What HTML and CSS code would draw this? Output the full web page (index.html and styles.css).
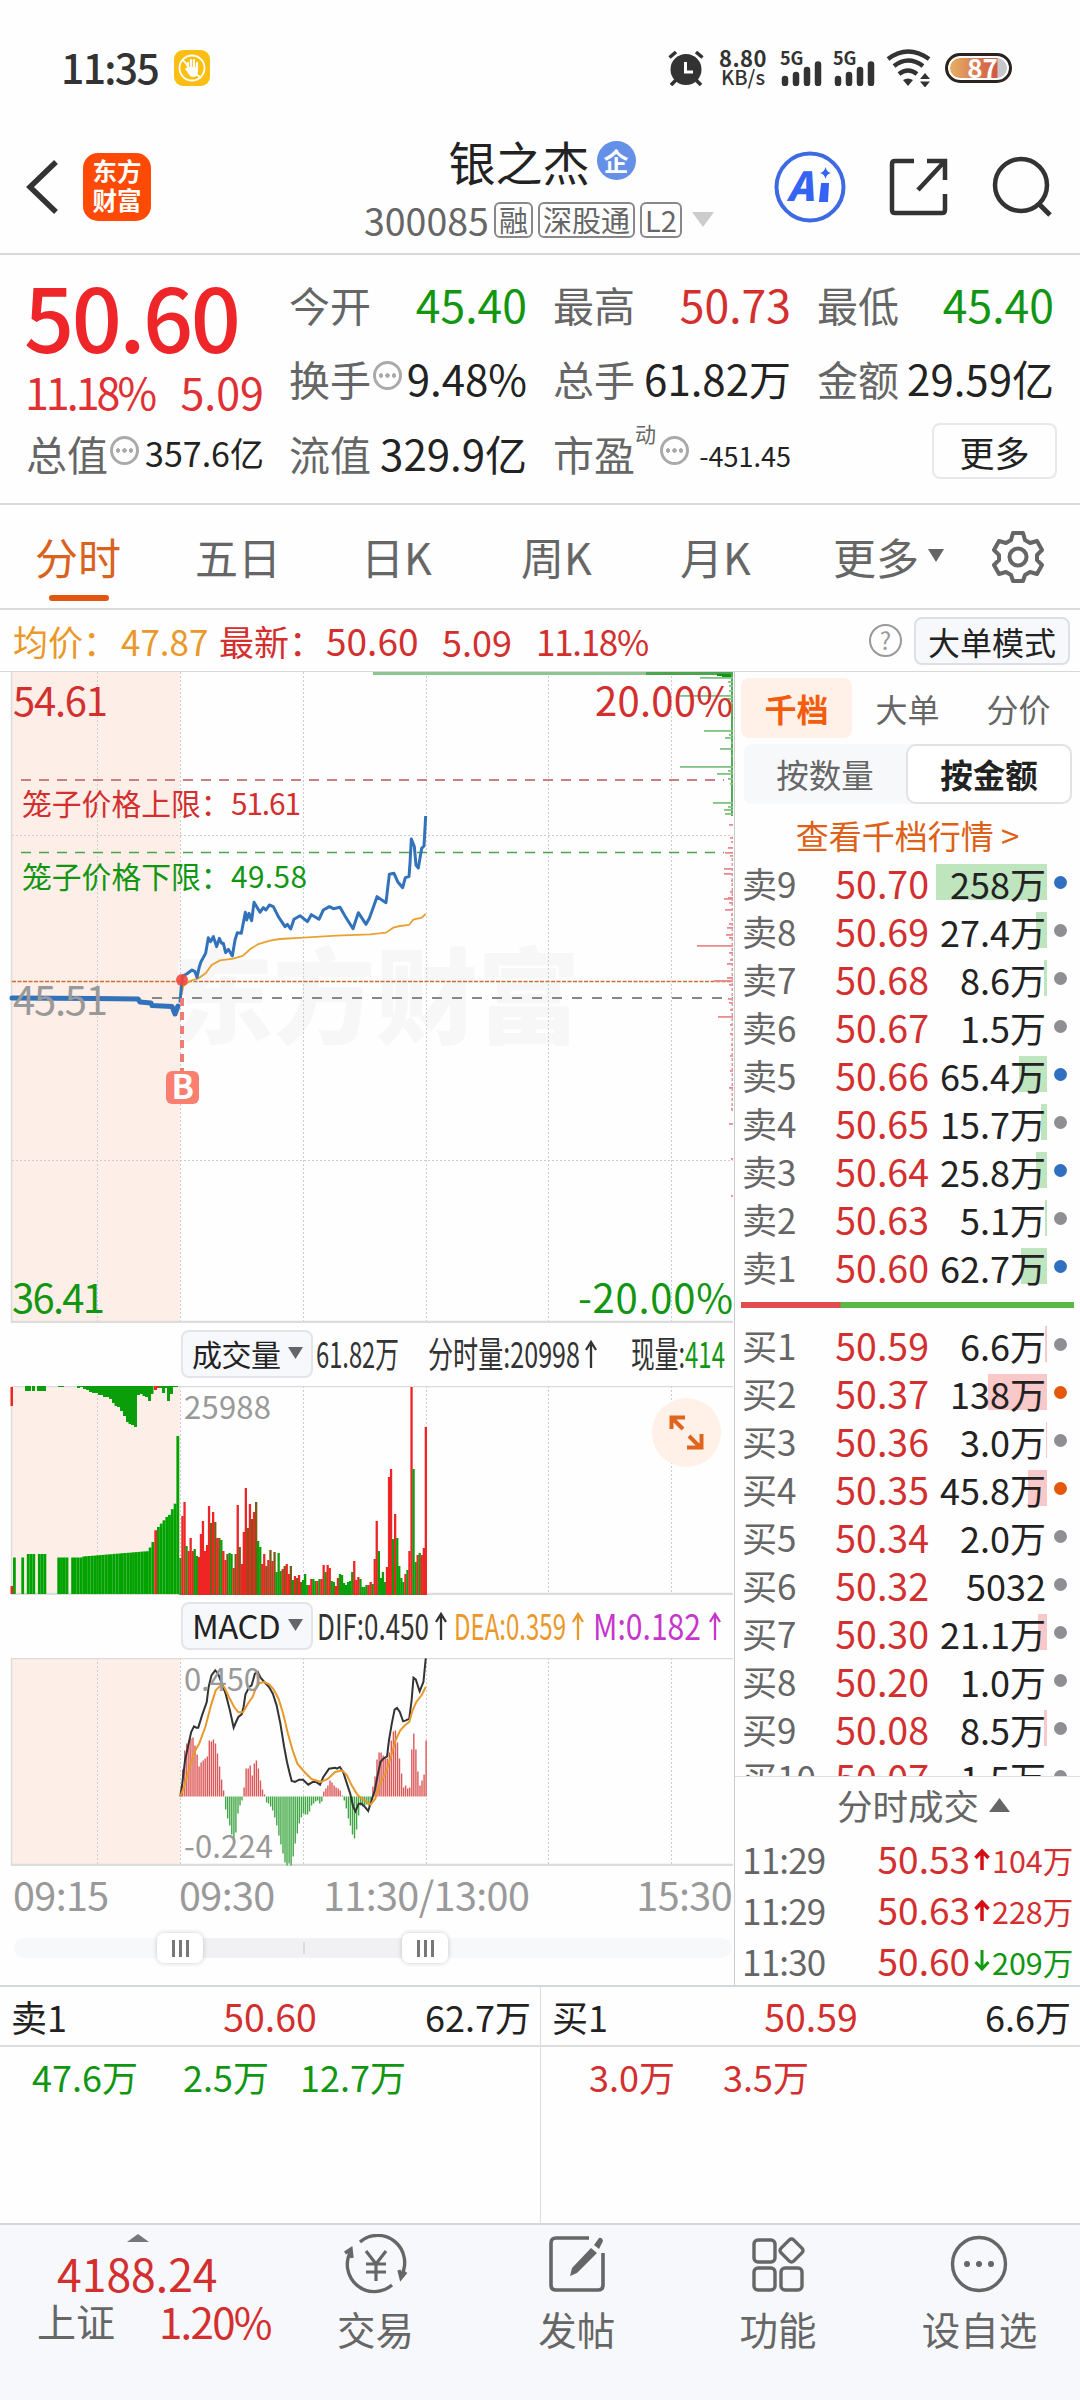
FILE: index.html
```html
<!DOCTYPE html>
<html lang="zh-CN">
<head>
    <meta charset="UTF-8">
    <meta name="viewport" content="width=device-width, initial-scale=1.0">
    <title>银之杰 300085</title>
    <link rel="stylesheet" href="styles.css">
</head>
<body>
    <div class="status-bar">
        <span class="clock">11:35</span>
        <svg class="app-badge" width="36" height="36" viewBox="0 0 36 36">
            <rect width="36" height="36" rx="9" fill="#fbbf14"/>
            <circle cx="18" cy="18" r="12.500" fill="none" stroke="#fff" stroke-width="1.800"/>
            <path d="M14 19v-6M17 18v-8M20 18v-8M23 19v-6" stroke="#fff" stroke-width="2.200" stroke-linecap="round"/>
            <path d="M13 17h11v4q0 6-5 6-3 0-5-4l-3-4q1-2 3 0z" fill="#fff"/>
            <path d="M9 10l5 6M22 24l5 4" stroke="#fff" stroke-width="1.800"/>
        </svg>
        <div class="status-right">
            <svg width="36" height="36" viewBox="0 0 36 36">
                <circle cx="18" cy="19.500" r="15.500" fill="#333"/>
                <path d="M1.500 7.500L8 2M34.500 7.500L28 2M8 30l-5 5M28 30l5 5" stroke="#333" stroke-width="3.600"/>
                <path d="M17.500 12v10h7.500" fill="none" stroke="#fff" stroke-width="3"/>
            </svg>
            <div class="net-speed"><b>8.80</b><span>KB/s</span></div>
            <div class="signal">
                <b>5G</b>
                <svg width="42" height="26" viewBox="0 0 42 26"><path d="M4 19v4M15 15v8M26 10v13M37 4.500v18.500" stroke="#333" stroke-width="6.500" stroke-linecap="round"/></svg>
            </div>
            <div class="signal">
                <b>5G</b>
                <svg width="42" height="26" viewBox="0 0 42 26"><path d="M4 19v4M15 15v8M26 10v13M37 4.500v18.500" stroke="#333" stroke-width="6.500" stroke-linecap="round"/></svg>
            </div>
            <svg class="wifi" width="46" height="38" viewBox="0 0 46 38">
                <path d="M2 10Q22-5 43 10M8 17q14-11 29 0M13 25q9-7 18 0" fill="none" stroke="#333" stroke-width="4.500"/>
                <path d="M17 31q5-3 10 0l-5 6zM34 30l5-6 5 6zM34 32.500h10l-5 6z" fill="#333"/>
            </svg>
            <div class="battery"><span>87</span></div>
        </div>
    </div>

    <header class="header">
        <div class="header-left">
            <svg width="34" height="56" viewBox="0 0 34 56"><path d="M30 3L4 28l26 25" fill="none" stroke="#333" stroke-width="5.500"/></svg>
            <div class="logo">东方<br>财富</div>
        </div>
        <div class="title">
            <div class="name">银之杰<span class="ent">企</span></div>
            <div class="code">300085<span class="tag">融</span><span class="tag">深股通</span><span class="tag">L2</span><svg width="22" height="15" viewBox="0 0 22 15"><path d="M0 0h22L11 15z" fill="#ccc"/></svg></div>
        </div>
        <div class="header-right">
            <svg width="72" height="74" viewBox="0 0 72 74">
                <circle cx="36" cy="37" r="33.500" fill="none" stroke="#3d69e3" stroke-width="4"/>
                <text x="13" y="51" class="ai-text">A</text>
                <path d="M48 34h6l-1 17h-7z" fill="#3563f4" stroke="#3563f4" stroke-width="2"/>
                <path d="M51.500 17q1 5 5.500 6-4.500 1-5.500 6-1-5-5.500-6 4.500-1 5.500-6z" fill="#3563f4"/>
            </svg>
            <svg width="60" height="60" viewBox="0 0 60 60"><path d="M25 4H6q-3 0-3 3v46q0 3 3 3h47q3 0 3-3V37M38 4h18v19M56 4L29 33" fill="none" stroke="#333" stroke-width="4.500"/></svg>
            <svg width="62" height="62" viewBox="0 0 62 62"><circle cx="29" cy="29" r="26" fill="none" stroke="#333" stroke-width="4.500"/><path d="M47 48l11 11" stroke="#333" stroke-width="5"/></svg>
        </div>
    </header>

    <section class="quote">
        <div class="quote-main">
            <div class="price">50.60</div>
            <div class="change"><span>11.18%</span><span>5.09</span></div>
            <div class="cell cap"><label>总值</label><i class="more-dot"></i><span class="mid">357.6亿</span></div>
        </div>
        <div class="quote-grid">
            <div class="cell"><label>今开</label><span class="green">45.40</span></div>
            <div class="cell"><label>最高</label><span class="red">50.73</span></div>
            <div class="cell"><label>最低</label><span class="green">45.40</span></div>
            <div class="cell"><label>换手</label><i class="more-dot"></i><span>9.48%</span></div>
            <div class="cell"><label>总手</label><span>61.82万</span></div>
            <div class="cell"><label>金额</label><span>29.59亿</span></div>
            <div class="cell"><label>流值</label><span>329.9亿</span></div>
            <div class="cell"><label>市盈</label><sup>动</sup><i class="more-dot"></i><span class="small">-451.45</span></div>
            <div class="cell"><button class="more-btn">更多</button></div>
        </div>
    </section>

    <nav class="tabs">
        <span class="tab active">分时</span>
        <span class="tab">五日</span>
        <span class="tab">日K</span>
        <span class="tab">周K</span>
        <span class="tab">月K</span>
        <span class="tab">更多<svg width="16" height="13" viewBox="0 0 16 13"><path d="M0 0h16L8 13z" fill="#666"/></svg></span>
        <svg class="gear" width="54" height="54" viewBox="0 0 54 54">
            <path d="M22 3h10l2 7 5 3 7-2 5 9-5 5v5l5 5-5 9-7-2-5 3-2 6H22l-2-6-5-3-7 2-5-9 5-5v-5l-5-5 5-9 7 2 5-3z" fill="none" stroke="#666" stroke-width="4" stroke-linejoin="round"/>
            <circle cx="27" cy="27" r="8.500" fill="none" stroke="#666" stroke-width="4"/>
        </svg>
    </nav>

    <div class="info">
        <span class="orange">均价：</span><span class="orange avg">47.87</span>
        <span class="red">最新：</span><span class="red last">50.60</span><span class="red diff">5.09</span><span class="red rate">11.18%</span>
        <span class="help">?</span>
        <button class="mode-btn">大单模式</button>
    </div>

    <main class="main">
        <div class="charts">
            <svg class="price-chart" width="734" height="651" viewBox="0 0 734 651">
                <rect x="12" y="0" width="168" height="650" class="pre"/>
                <text x="171" y="364" textLength="409" lengthAdjust="spacingAndGlyphs" class="watermark">东方财富</text>
                <g class="grid">
                    <path d="M97.500 0v650M180.500 0v650M303.500 0v650M426.500 0v650M548.500 0v650M671.500 0v650M12 163.500h721M12 488.500h721"/>
                </g>
                <path d="M11.500 0v650" class="frame"/>
                <path d="M11 650h722" class="frame thick"/>
                <path d="M21 108h703" stroke="#cc7f80" stroke-width="2" stroke-dasharray="10 8"/>
                <path d="M21 180.500h703" stroke="#4aa54d" stroke-width="1.500" stroke-dasharray="10 8"/>
                <path d="M12 309.500h721" stroke="#c9703a" stroke-width="1.300" stroke-dasharray="4 1.500"/>
                <path d="M152 326h581" stroke="#888" stroke-width="2" stroke-dasharray="10 10"/>
                <path d="M12 326L95 326.500 138 327 140 330 151 331 152 333.500 172 334.500 175 342 178 334" class="line-pre"/>
                <svg x="170" y="108" width="280" height="330" viewBox="0 0 840 990">
                    <polyline class="line-avg" points="34,645 40,618 60,603 85,595 107,580 125,555 150,541 190,536 218,528 240,508 265,492 300,482 330,477 400,473 500,467 600,463 648,458 670,443 690,438 717,435 730,419 755,413 767,402"/>
                    <polyline class="line-price" points="30,668 34,620 38,588 50,582 66,570 75,575 81,592 88,560 93,545 107,520 115,473 122,485 130,470 140,500 148,475 155,490 160,490 167,518 175,508 187,528 195,480 202,458 214,460 226,397 230,420 237,400 245,422 252,367 270,397 280,383 288,390 298,375 310,380 325,410 345,440 352,433 362,447 372,418 390,407 412,425 424,404 447,418 460,390 478,380 490,386 510,382 525,408 540,432 549,446 565,398 588,433 598,415 610,382 621,350 648,368 658,283 672,280 683,305 698,323 706,293 717,290 720,250 724,177 733,200 738,255 745,264 755,205 762,198 767,108"/>
                </svg>
                <g id="depth"></g>
                <path d="M182 326v76" stroke="#ec7e74" stroke-width="4" stroke-dasharray="8 6"/>
                <circle cx="182" cy="308" r="6" fill="#f0493c" opacity=".9"/>
                <rect x="166" y="399" width="33" height="33" rx="6" fill="#fb7f70"/>
                <text x="171.500" y="427" class="flag">B</text>
                <text x="13" y="43.500" class="axis-text red" textLength="95">54.61</text>
                <text x="13" y="343" class="axis-text mute" textLength="95">45.51</text>
                <text x="12" y="641" class="axis-text green" textLength="93">36.41</text>
                <text x="733" y="43.500" class="axis-text red" text-anchor="end" textLength="138">20.00%</text>
                <text x="733" y="641" class="axis-text green" text-anchor="end" textLength="155">-20.00%</text>
                <text x="22" y="143" class="cage red">笼子价格上限：</text>
                <text x="231" y="143" class="cage red" textLength="70">51.61</text>
                <text x="22" y="216" class="cage green">笼子价格下限：</text>
                <text x="231" y="216" class="cage green" textLength="76">49.58</text>
            </svg>

            <div class="sub-head">
                <button class="indicator">成交量<svg width="15" height="12" viewBox="0 0 15 12"><path d="M0 0h15L7.500 12z" fill="#666"/></svg></button>
                <svg class="readout" width="421" height="60" viewBox="313 0 421 60">
                    <text x="316" y="44" textLength="83" lengthAdjust="spacingAndGlyphs">61.82万</text>
                    <text x="428" y="44" textLength="152" lengthAdjust="spacingAndGlyphs">分时量:20998</text>
                    <path d="M591 44V18M586 26l5-8 5 8" fill="none" stroke="#333" stroke-width="2.300"/>
                    <text x="631" y="44" textLength="54" lengthAdjust="spacingAndGlyphs">现量:</text>
                    <text x="685" y="44" textLength="40" lengthAdjust="spacingAndGlyphs" class="green">414</text>
                </svg>
            </div>
            <svg class="sub-chart" width="734" height="209" viewBox="0 0 734 209">
                <rect x="12" y="0" width="168" height="208" class="pre"/>
                <path class="grid" d="M97.500 0v208M180.500 0v208M303.500 0v208M426.500 0v208M548.500 0v208M671.500 0v208"/>
                <path d="M11 .5h722M11.500 0v208" class="frame"/>
                <path d="M11 208h722" class="frame thick"/>
                <g id="volume"></g>
                <text x="184" y="33" class="scale" textLength="87">25988</text>
                <circle cx="686.500" cy="46.500" r="34.500" fill="#fff0e8"/>
                <path d="M671.500 43V31.500H685M672 32l11 11M689 50l11 11M687 61.500h14.500V48" fill="none" stroke="#de6420" stroke-width="4"/>
            </svg>

            <div class="sub-head macd-head">
                <button class="indicator">MACD<svg width="15" height="12" viewBox="0 0 15 12"><path d="M0 0h15L7.500 12z" fill="#666"/></svg></button>
                <svg class="readout" width="421" height="60" viewBox="313 0 421 60">
                    <text x="317" y="44" textLength="112" lengthAdjust="spacingAndGlyphs">DIF:0.450</text>
                    <path d="M441 44V18M436 26l5-8 5 8" fill="none" stroke="#333" stroke-width="2.300"/>
                    <text x="454" y="44" textLength="112" lengthAdjust="spacingAndGlyphs" class="orange">DEA:0.359</text>
                    <path d="M578 44V18M573 26l5-8 5 8" fill="none" stroke="#eb982a" stroke-width="2.300"/>
                    <text x="593" y="44" textLength="108" lengthAdjust="spacingAndGlyphs" class="purple">M:0.182</text>
                    <path d="M715 44V18M710 26l5-8 5 8" fill="none" stroke="#c636cc" stroke-width="2.300"/>
                </svg>
            </div>
            <svg class="sub-chart" width="734" height="208" viewBox="0 0 734 208">
                <rect x="12" y="0" width="168" height="207" class="pre"/>
                <path class="grid" d="M97.500 0v207M180.500 0v207M303.500 0v207M426.500 0v207M548.500 0v207M671.500 0v207"/>
                <path d="M11 .5h722M11.500 0v207" class="frame"/>
                <path d="M11 207h722" class="frame thick"/>
                <g id="macd"></g>
                <svg width="734" height="207" viewBox="0 203 1555 621" preserveAspectRatio="none">
                    <polyline class="line-dif" points="382,618 386,580 392,510 398,470 405,425 411,408 416,412 420,412 428,375 438,335 442,290 448,255 456,240 462,250 470,280 478,310 487,360 495,412 500,395 505,380 512,372 516,350 520,312 528,290 533,285 540,250 546,245 552,262 560,275 570,290 578,310 586,345 594,400 602,470 608,515 613,545 618,572 625,575 634,568 642,568 653,583 664,574 671,576 678,583 685,560 690,550 697,535 710,532 714,535 720,530 727,545 735,580 742,610 748,648 753,663 760,640 766,640 772,648 780,662 786,635 794,600 800,555 806,515 812,505 820,498 824,450 830,400 836,358 841,353 847,365 854,393 860,390 867,385 872,330 876,262 881,268 889,303 897,275 902,204"/>
                    <polyline class="line-dea" points="382,618 390,590 400,540 412,485 422,460 435,410 447,345 457,300 468,285 475,290 485,320 496,350 505,366 515,366 525,340 535,320 543,290 550,278 560,275 570,282 580,298 590,325 600,370 610,430 620,480 630,520 645,545 660,566 680,575 695,565 710,545 725,540 735,555 745,585 758,615 770,628 785,643 795,625 805,580 818,545 828,500 838,450 848,420 858,405 867,395 874,360 882,335 893,315 902,290"/>
                </svg>
                <text x="184" y="33" class="scale" textLength="77">0.450</text>
                <text x="184" y="200" class="scale" textLength="89">-0.224</text>
            </svg>

            <div class="time-axis">
                <span>09:15</span><span>09:30</span><span>11:30/13:00</span><span>15:30</span>
            </div>
            <div class="slider">
                <div class="range"></div>
                <div class="handle start"><i></i><i></i><i></i></div>
                <div class="handle end"><i></i><i></i><i></i></div>
            </div>
        </div>

        <aside class="book">
            <div class="book-tabs"><span class="on">千档</span><span>大单</span><span>分价</span></div>
            <div class="book-toggle"><span>按数量</span><span class="on">按金额</span></div>
            <div class="book-link">查看千档行情 &gt;</div>
            <div class="levels sell" id="sell"></div>
            <div class="ratio"></div>
            <div class="levels buy" id="buy"></div>
            <div class="deal-title">分时成交<svg width="21" height="14" viewBox="0 0 21 14"><path d="M10.500 0L21 14H0z" fill="#666"/></svg></div>
            <div class="deals">
                <div class="deal red"><time>11:29</time><span>50.53</span><svg width="16" height="22" viewBox="0 0 16 22"><path d="M8 22V3M1.500 10L8 3l6.500 7" fill="none" stroke="#d40f14" stroke-width="3.500"/></svg><em>104万</em></div>
                <div class="deal red"><time>11:29</time><span>50.63</span><svg width="16" height="22" viewBox="0 0 16 22"><path d="M8 22V3M1.500 10L8 3l6.500 7" fill="none" stroke="#d40f14" stroke-width="3.500"/></svg><em>228万</em></div>
                <div class="deal red"><time>11:30</time><span>50.60</span><svg width="16" height="22" viewBox="0 0 16 22"><path d="M8 0v19M1.500 12L8 19l6.500-7" fill="none" stroke="#129a12" stroke-width="3"/></svg><em class="green">209万</em></div>
            </div>
        </aside>
    </main>

    <section class="queues">
        <div class="queue">
            <div class="queue-head"><span>卖1</span><span class="red">50.60</span><span>62.7万</span></div>
            <div class="queue-list green"><span>47.6万</span><span>2.5万</span><span>12.7万</span></div>
        </div>
        <div class="queue">
            <div class="queue-head"><span>买1</span><span class="red">50.59</span><span>6.6万</span></div>
            <div class="queue-list red"><span>3.0万</span><span>3.5万</span></div>
        </div>
    </section>

    <footer class="bottom-nav">
        <div class="index">
            <svg width="22" height="8" viewBox="0 0 22 8"><path d="M11 0l11 8H0z" fill="#777"/></svg>
            <div class="index-value">4188.24</div>
            <div class="index-row"><span>上证</span><b>1.20%</b></div>
        </div>
        <div class="nav-item">
            <svg width="64" height="60" viewBox="0 0 64 60">
                <path d="M16 8A27 27 0 0 1 57 42M48 51A27 27 0 0 1 7 17M1 19l6-4 1 9M62 38l-5 6-2-8" fill="none" stroke="#666" stroke-width="3.400"/>
                <path d="M22 17l10 13 10-13M32 30v17M22 30h20M22 38h20" fill="none" stroke="#666" stroke-width="3.200"/>
            </svg>
            <span>交易</span>
        </div>
        <div class="nav-item">
            <svg width="58" height="60" viewBox="0 0 58 60">
                <path d="M41 4H8q-5 0-5 5v42q0 5 5 5h42q5 0 5-5V19" fill="none" stroke="#666" stroke-width="3.600"/>
                <path d="M43 14l6 5-20 20-7 3 2-8zM46 11l5-7q3-1 4 3l-4 8z" fill="#666"/>
            </svg>
            <span>发帖</span>
        </div>
        <div class="nav-item">
            <svg width="56" height="60" viewBox="0 0 56 60" fill="none" stroke="#666" stroke-width="3.400">
                <rect x="4" y="6" width="21" height="22" rx="4"/><rect x="4" y="34" width="21" height="22" rx="4"/><rect x="31" y="34" width="21" height="22" rx="4"/>
                <rect x="32.500" y="7.500" width="18" height="18" rx="3" transform="rotate(45 41.500 16.500)"/>
            </svg>
            <span>功能</span>
        </div>
        <div class="nav-item">
            <svg width="60" height="60" viewBox="0 0 60 60"><circle cx="30" cy="30" r="26.500" fill="none" stroke="#666" stroke-width="3.400"/><circle cx="18" cy="30" r="3" fill="#666"/><circle cx="30" cy="30" r="3" fill="#666"/><circle cx="42" cy="30" r="3" fill="#666"/></svg>
            <span>设自选</span>
        </div>
    </footer>

    <script src="chart.js"></script>
</body>
</html>
```
FILE: styles.css
```css
* {
    margin: 0;
    padding: 0;
    box-sizing: border-box;
}

body {
    width: 1080px;
    height: 2400px;
    overflow: hidden;
    background: #fefefe;
    color: #222;
    font-family: "Noto Sans CJK SC", "Noto Sans", sans-serif;
    font-size: 36px;
    line-height: 1;
    white-space: nowrap;
}

svg {
    display: block;
    flex: none;
}

button {
    font: inherit;
    color: inherit;
}

i, em {
    font-style: normal;
}

.red { color: #d32f2f; fill: #d32f2f; }
.green { color: #129612; fill: #129612; }
.orange { color: #eb982a; fill: #eb982a; }
.purple { fill: #c636cc; }
.mute { fill: #999; }

/* status bar */
.status-bar {
    height: 110px;
    padding: 26px 68px 0 61px;
    display: flex;
    align-items: center;
    color: #333;
}

.clock {
    margin-top: -4px;
    font-size: 41px;
    font-weight: 500;
    letter-spacing: -1.7px;
}

.app-badge {
    margin-left: 16px;
}

.status-right {
    margin-left: auto;
    display: flex;
    align-items: center;
}

.net-speed {
    width: 50px;
    margin-left: 14px;
    margin-top: -2px;
    font-size: 20px;
    line-height: 19px;
    text-align: center;
    font-weight: 500;
}

.net-speed b {
    display: block;
    font-size: 22px;
    letter-spacing: .5px;
}

.signal {
    width: 42px;
    height: 36px;
    margin-left: 13px;
    position: relative;
}

.signal b {
    display: block;
    font-size: 18px;
    line-height: 14px;
    margin-left: -1px;
}

.signal svg {
    margin-top: -4px;
}

.signal + .signal {
    margin-left: 11px;
}

.wifi {
    margin-left: 10px;
}

.battery {
    width: 67px;
    height: 30px;
    margin-left: 13px;
    border: 3px solid #2b2320;
    border-radius: 15px;
    background: linear-gradient(90deg, #e6b466, #d97850 50%, #cf5a44 80%, #c8c8cc 82%);
    box-shadow: inset 0 0 0 2px #fff;
    color: #fff;
    font-size: 26px;
    font-weight: 700;
    line-height: 22px;
    text-align: center;
    padding-left: 8px;
}

/* header */
.header {
    height: 145px;
    padding: 0 24px 0 26px;
    border-bottom: 2px solid #d9d9d9;
    display: flex;
    justify-content: space-between;
}

.header-left, .header-right {
    width: 310px;
    height: 144px;
    margin-top: 5px;
    display: flex;
    align-items: center;
}

.logo {
    width: 68px;
    height: 68px;
    margin-left: 23px;
    border-radius: 15px;
    background: #ff4a06;
    color: #fff;
    font-size: 24.5px;
    font-weight: 700;
    line-height: 29px;
    padding-top: 3px;
    text-align: center;
}

.title {
    width: 352px;
    margin-left: -2px;
    padding-top: 27px;
}

.name {
    display: flex;
    align-items: center;
    justify-content: center;
    padding-left: 4px;
    font-size: 47px;
}

.ent {
    width: 39px;
    height: 39px;
    margin-left: 7px;
    border-radius: 50%;
    background: #6490e8;
    color: #fff;
    font-size: 25px;
    font-weight: 700;
    line-height: 38px;
    text-align: center;
}

.code {
    margin-top: 17px;
    display: flex;
    align-items: center;
    color: #666;
    font-size: 37.5px;
}

.tag {
    height: 36px;
    margin-left: 5px;
    padding: 0 3px;
    border: 2px solid #888;
    border-radius: 6px;
    font-size: 29px;
    line-height: 31px;
}

.code svg {
    margin-left: 10px;
}

.header-right {
    padding-left: 28px;
}

.header-right svg:nth-child(2) {
    margin-left: 43px;
}

.header-right svg:nth-child(3) {
    margin-left: 43px;
}

.ai-text {
    font: italic 900 40px "Noto Sans CJK SC", sans-serif;
    fill: #3563f4;
}

/* quote */
.quote {
    height: 250px;
    padding: 0 26px;
    border-bottom: 2px solid #d9d9d9;
    display: flex;
}

.quote-main {
    width: 238px;
    padding-top: 13px;
}

.price {
    font-size: 88px;
    font-weight: 500;
    letter-spacing: -2.5px;
    margin-left: -2px;
    line-height: 94px;
    color: #ee2529;
}

.change {
    display: flex;
    justify-content: space-between;
    margin: 7px 0 0 -1px;
    font-size: 43px;
    line-height: 44px;
    color: #e03033;
}

.change span:first-child {
    letter-spacing: -3px;
}

.quote-grid {
    margin-left: 25px;
    width: 765px;
    display: grid;
    grid-template-columns: 238px 238px 237px;
    column-gap: 26px;
    grid-template-rows: 74px 75px 74px;
    padding-top: 12px;
}

.cell {
    display: flex;
    align-items: center;
    height: 74px;
    font-size: 44.5px;
}

.cell label {
    font-size: 41px;
    color: #666;
}

.cell span {
    margin-left: auto;
    white-space: nowrap;
}

.cell:nth-child(n+4) span {
    font-size: 42px;
}

.cell .mid {
    font-size: 34px;
}

.cell .small, .cell:nth-child(n+4) .small {
    font-size: 27px;
    padding-top: 4px;
}

.cell sup {
    font-size: 21px;
    color: #666;
    align-self: flex-start;
    margin-top: 7px;
}

.cap {
    margin-top: 3px;
}

.more-dot {
    flex: none;
    width: 29px;
    height: 29px;
    border: 3px solid #aaa;
    border-radius: 50%;
    background:
        radial-gradient(circle at 5px 11.5px, #aaa 2px, transparent 2.5px),
        radial-gradient(circle at 11.5px 11.5px, #aaa 2px, transparent 2.5px),
        radial-gradient(circle at 18px 11.5px, #aaa 2px, transparent 2.5px);
    margin: -6px 0 0 2px;
}

.cell sup + .more-dot {
    margin-left: 4px;
}

.more-btn {
    width: 125px;
    height: 56px;
    margin: -4px -3px 0 auto;
    background: none;
    border: 2px solid #e6e8eb;
    border-radius: 8px;
    font-size: 35px;
}

/* tabs */
.tabs {
    height: 105px;
    border-bottom: 2px solid #dadada;
    padding: 0 34px 0 35px;
    display: grid;
    grid-template-columns: 160px 166px 160px 159px 153px 158px 54px;
    align-items: center;
    color: #666;
    font-size: 43px;
}

.tab {
    height: 103px;
    position: relative;
    display: flex;
    align-items: center;
}

.tab svg {
    margin: -2px 0 0 9px;
}

.tab.active {
    color: #d9621f;
}

.tab.active::after {
    content: "";
    position: absolute;
    left: 14px;
    bottom: 7px;
    width: 60px;
    height: 6px;
    border-radius: 3px;
    background: #e0560f;
}

/* info row */
.info {
    height: 62px;
    padding: 0 10px 0 13px;
    display: flex;
    align-items: center;
    font-size: 35px;
    border-bottom: 1px solid #d8d8d8;
}

.avg { width: 98px; margin-left: 3px; }
.last { margin-left: 2px; width: 116px; font-size: 37px; }
.diff { width: 94px; font-size: 36px; }
.rate { letter-spacing: -1.3px; }

.help {
    width: 33px;
    height: 33px;
    margin-left: auto;
    border: 2.5px solid #999;
    border-radius: 50%;
    color: #999;
    font-size: 24px;
    line-height: 27px;
    text-align: center;
}

.mode-btn {
    width: 156px;
    height: 48px;
    margin-left: 12px;
    background: #f7f8fb;
    border: 2px solid #dcdfe3;
    border-radius: 8px;
    font-size: 32px;
}

/* charts */
.main {
    height: 1315px;
    display: flex;
    border-bottom: 2px solid #d3d6da;
}

.charts {
    width: 735px;
    border-right: 1px solid #ccc;
}

.pre { fill: #fdeee7; }
.grid { stroke: #ccc; stroke-width: 1; stroke-dasharray: 2 2; fill: none; }
.frame { stroke: #dcdcdc; stroke-width: 1.5; fill: none; }
.frame.thick { stroke-width: 2.5; }

.watermark {
    font-size: 104px;
    font-weight: 900;
    fill: #f7f7f7;
}

.line-pre { fill: none; stroke: #3272ba; stroke-width: 5; stroke-linejoin: round; stroke-linecap: round; }
.line-price { fill: none; stroke: #3272ba; stroke-width: 9; stroke-linejoin: round; }
.line-avg { fill: none; stroke: #e8a233; stroke-width: 5.5; }
.line-dif, .line-dea { fill: none; stroke: #333; stroke-width: 2; vector-effect: non-scaling-stroke; }
.line-dea { stroke: #e8982c; }

.axis-text { font-size: 40px; }
.cage { font-size: 29.8px; }
.flag { font-size: 33px; font-weight: 700; fill: #fff; }
.scale { font-size: 31px; fill: #999; }

.sub-head {
    height: 63px;
    display: flex;
    padding: 7px 0 0 181px;
}

.indicator {
    width: 132px;
    height: 48px;
    border: 2px solid #e3e5e9;
    border-radius: 8px;
    background: #f7f8fb;
    font-size: 30px;
    display: flex;
    align-items: center;
    justify-content: space-between;
    padding: 0 8px 2px 9px;
    letter-spacing: -.5px;
}

.macd-head .indicator {
    font-size: 33px;
}

.readout {
    margin-top: -6px;
    font-size: 36px;
    fill: #333;
}

.time-axis {
    height: 58px;
    padding: 8px 2px 0 13px;
    display: grid;
    grid-template-columns: 166px 144px 1fr auto;
    font-size: 39.5px;
    letter-spacing: -.6px;
    color: #999;
}

.slider {
    margin: 14px 2px 0 14px;
    height: 20px;
    border-radius: 10px;
    background: #f7f8fa;
    position: relative;
}

.range {
    margin-left: 166px;
    width: 246px;
    height: 20px;
    background: linear-gradient(#dcdcdc, #dcdcdc) 123px 4px / 2px 12px no-repeat #f1f1f3;
}

.handle {
    position: absolute;
    top: -5px;
    width: 46px;
    height: 30px;
    border-radius: 7px;
    background: #fff;
    box-shadow: 0 0 5px rgba(0, 0, 0, .2);
    display: flex;
    align-items: center;
    justify-content: center;
    gap: 4px;
}

.handle i {
    width: 3px;
    height: 17px;
    background: #777;
}

.handle.start { left: 143px; }
.handle.end { left: 388px; }

/* order book */
.book {
    width: 345px;
    padding: 6px 6px 0 6px;
}

.book-tabs {
    height: 60px;
    display: grid;
    grid-template-columns: 111px 111px 111px;
    text-align: center;
    color: #666;
    font-size: 32px;
    line-height: 60px;
}

.book-tabs .on {
    background: #fff0e8;
    border-radius: 8px;
    color: #f25c0c;
    font-weight: 700;
}

.book-toggle {
    height: 60px;
    margin: 6px 2px 0 3px;
    display: flex;
    background: #f7f8fa;
    border-radius: 8px;
    color: #666;
    font-size: 32.5px;
    line-height: 60px;
    text-align: center;
}

.book-toggle span {
    flex: 1;
}

.book-toggle .on {
    background: #fff;
    border: 2px solid #e2e2e4;
    border-radius: 10px;
    color: #222;
    font-weight: 700;
    line-height: 56px;
}

.book-link {
    height: 60px;
    line-height: 62px;
    text-align: center;
    font-size: 33px;
    color: #de6017;
}

.level {
    height: 48px;
    display: grid;
    grid-template-columns: 56px 131px 118px 1fr;
    padding-left: 1px;
    line-height: 38px;
    text-align: right;
}

.level label {
    color: #666;
    font-size: 35px;
    text-align: left;
}

.level .px {
    color: #d32f2f;
    font-size: 37.5px;
}

.level .amt {
    height: 36px;
    padding-right: 1px;
    background: linear-gradient(#bfe5bf, #bfe5bf) right / var(--w) 100% no-repeat;
}

.buy .level .amt {
    background-image: linear-gradient(#f9c8c9, #f9c8c9);
}

.level .dot {
    width: 13px;
    height: 13px;
    margin: 12px 0 0 7px;
    border-radius: 50%;
    background: #8e8e93;
}

.level .dot.blue { background: #2f71bf; }
.level .dot.hot { background: #e5580c; }

.ratio {
    height: 6px;
    margin-top: 6px;
    background: linear-gradient(90deg, #e24c4c 99px, #5bb845 100px);
}

.buy {
    height: 468px;
    padding-top: 18px;
    overflow: hidden;
}

.deal-title {
    height: 57px;
    margin: 0 -6px;
    padding: 0 64px 0 102px;
    border-top: 1px solid #ddd;
    display: flex;
    align-items: center;
    gap: 10px;
    color: #666;
    font-size: 35.5px;
}

.deal {
    height: 51px;
    display: flex;
    align-items: center;
    padding: 0 1px;
    font-size: 37px;
}

.deal time {
    width: 100px;
    color: #666;
    font-size: 35px;
    letter-spacing: -.8px;
}

.deal span {
    margin-left: auto;
}

.deal svg {
    margin: 0 2px 0 4px;
}

.deal em {
    font-size: 30.5px;
    width: 81px;
    padding-top: 3px;
}

/* queues */
.queues {
    height: 238px;
    display: flex;
    border-bottom: 2px solid #d3d6da;
}

.queue {
    width: 540px;
    font-size: 36px;
}

.queue + .queue {
    border-left: 1px solid #ddd;
}

.queue-head {
    height: 60px;
    padding: 0 9px 0 11px;
    border-bottom: 2px solid #dedede;
    display: grid;
    grid-template-columns: 209px 100px 1fr;
    align-items: center;
}

.queue-head .red {
    font-size: 37.5px;
    text-align: center;
}

.queue-head span:last-child {
    text-align: right;
}

.queue-list {
    padding: 11px 0 0 32px;
    display: grid;
    grid-template-columns: 151px 117px 110px;
    font-size: 36px;
}

.queue-list.red {
    padding-left: 48px;
    grid-template-columns: 134px 110px;
}

/* bottom nav */
.bottom-nav {
    height: 175px;
    background: #f7f8fb;
    display: flex;
    color: #666;
}

.index {
    width: 275px;
    padding-top: 9px;
    color: #d32f2f;
}

.index svg {
    margin-left: 127px;
}

.index-value {
    margin: 9px 0 0 57px;
    font-size: 44.5px;
}

.index-row {
    display: flex;
    align-items: center;
    margin: 4px 0 0 37px;
    font-size: 42px;
    letter-spacing: -1.7px;
}

.index-row span {
    width: 122px;
    font-size: 39px;
    color: #666;
    letter-spacing: 0;
}

.index-row b {
    font-weight: 400;
}

.nav-item {
    width: 201.3px;
    padding-top: 9px;
    display: flex;
    flex-direction: column;
    align-items: center;
    gap: 15px;
    font-size: 38.5px;
}
```
FILE: chart.js
```js
const RED = '#ee2524';
const GREEN = '#0a9f0a';

function rects(id, list) {
    document.getElementById(id).innerHTML = list.map(([x, y, w, h, fill]) =>
        `<rect x="${x.toFixed(1)}" y="${y.toFixed(1)}" width="${w}" height="${h}" fill="${fill}"/>`
    ).join('');
}

// minute volume since 09:30, r = up, g = down
const volume = [36,78,92,48,43,56,43,45,38,37,60,73,43,49,88,71,82,72,56,56,54,43,34,40,41,40,26,40,89,47,30,62,106,66,90,75,82,92,53,47,30,40,28,34,44,33,42,22,41,23,25,28,30,20,28,14,18,16,19,12,14,20,9,9,15,15,13,13,15,15,29,22,29,26,13,12,8,16,20,19,11,9,12,13,22,33,14,17,15,7,7,9,9,12,10,35,73,43,16,22,12,27,117,125,55,80,56,28,16,12,20,24,43,207,125,32,39,41,39,46,167];
const volumeSide = [
    'grrgrrrggr', 'rrrrrgrgrg', 'grrgggrgrg', 'rrrgrgrggg', 'rrgrgrgggg', 'rgrrggrgrg',
    'gggrrggrgr', 'rgrrggrrgg', 'gggggrrrgg', 'ggrrgrrggg', 'grrrgrgggg', 'rgrrggrgrr', 'r'
].join('');

// call auction before 09:30: [x, bottom height, side]
const auction = [];
for (let x = 14; x < 180; x += 2.77) {
    const gap = (x > 16 && x < 20) || (x > 23 && x < 25.5) || (x > 31 && x < 33) || (x > 36 && x < 38.5) || (x > 46 && x < 48.5) || (x > 50 && x < 58) || (x > 68 && x < 70) || (x > 81 && x < 83);
    if (gap) continue;
    let h = x > 25 && x < 47 ? 40 : 36.5;
    if (x > 83) h = 37.5 + (x - 83) / 12;
    if (x > 148) h = 43 + (x - 148) * 2;
    if (x > 153) h = 61 + (x - 153) * 1.2;
    if (x > 168) h = 77 + (x - 168) * 2;
    if (x > 176) h = 158;
    if (x > 178.5) h = 36;
    auction.push([x, h, x > 153 && x < 158 ? 'r' : 'g']);
}
const auctionTop = [[26,5],[29,5],[33,5],[38,5],[41,5],[44,5],[59,1],[62,1],[78,2],[81,1],[84,3],[87,4],[90,6],[93,7],[96,7],[99,9],[101.5,9],[104,11],[107,11],[110,13],[113,17],[115.5,20],[118,21],[121,25],[124,30],[127,36],[129.5,38],[132,39],[135,41],[138,9],[141,8],[143.5,10],[146,11],[149,15],[151.5,8],[160,2],[163,7],[165.5,2],[168,15],[171,8],[174,1],[176,1]];

const bars = [[10.5, 1, 2.5, 19, RED], [10.5, 200, 3, 8, RED], [154, 0, 3, 4, RED], [157, 0, 2, 2, RED]];
auction.forEach(([x, h, side]) => bars.push([x - 1, 208 - h, 2.8, h, side === 'r' ? RED : '#00a200']));
auctionTop.forEach(([x, h]) => bars.push([x - 1, 0, 3, h, GREEN]));
volume.forEach((h, i) => {
    const mixed = i > 14 && i < 60 && volumeSide[i] === 'g' && volumeSide[i - 1] === 'r';
    const fill = volumeSide[i] === 'r' ? RED : mixed ? '#7a5a14' : GREEN;
    bars.push([179.3 + i * 2.045, 208 - h, 2.3, h + 1, fill]);
});
rects('volume', bars);

const macd = [2,27,46,53,55,58,59,51,42,30,34,36,38,40,56,55,57,53,43,30,17,6,-13,-22,-29,-38,-48,-36,-17,-9,-4,9,28,28,31,21,33,36,28,16,7,2,-6,-7,-10,-14,-21,-29,-39,-48,-57,-66,-69,-67,-69,-60,-47,-37,-27,-21,-17,-18,-18,-15,-9,-7,-5,-4,-7,-5,5,8,11,16,14,11,9,8,6,1,-4,-12,-22,-29,-38,-42,-33,-19,-9,-10,-9,-8,-9,-4,10,20,37,44,44,41,38,38,44,56,65,66,54,38,23,9,11,8,9,47,63,47,25,11,16,22,56];
rects('macd', macd.map((v, i) => [180 + i * 2.045, v > 0 ? 138.5 - v : 138.5, 1.4, Math.abs(v), v > 0 ? '#dc5757' : '#3fa844']));

// resting orders along the right edge: [y, length]
const asks = [[5,33],[23,56],[9,5],[13,4],[18,4],[26,8],[30,5],[58,29],[62,4],[65,8],[70,2],[76,13],[83,2],[94,53],[98,5],[101,16],[106,5],[111,3],[130,20],[134,5],[137,9],[141,8]];
const bids = [[152,4],[165,3],[169,2],[175,5],[180,8],[183,3],[196,9],[201,9],[208,2],[219,3],[225,5],[226,9],[230,4],[237,8],[242,2],[251,4],[255,6],[262,7],[265,4],[273,36],[280,4],[287,3],[291,6],[305,6],[308,19],[312,4],[326,5],[330,4],[337,3],[344,15],[352,3],[361,3],[372,2],[383,3],[398,3],[415,4],[436,2],[451,4],[486,2],[523,2]];
const depth = [[373, 0, 360, 3, '#8fc592'], [646, 0, 87, 3, '#4ba54f'], [717, 2, 16, 2, '#129612'], [722, 4, 11, 2, '#129612'], [731, 0, 2, 144, '#4fae52']];
asks.forEach(([y, w]) => depth.push([733 - w, y, w, 1.8, '#7fc283']));
bids.forEach(([y, w]) => depth.push([733 - w, y, w, 1.8, '#eb8b8d']));
for (let y = 186; y < 440; y += 5) depth.push([731.5, y, 1.5, 3, '#e09a9b']);
rects('depth', depth);

// order book
const sell = [
    ['卖9', '50.70', '258万', 111, 'blue'], ['卖8', '50.69', '27.4万', 11], ['卖7', '50.68', '8.6万', 3],
    ['卖6', '50.67', '1.5万', 0], ['卖5', '50.66', '65.4万', 28, 'blue'], ['卖4', '50.65', '15.7万', 6],
    ['卖3', '50.64', '25.8万', 11, 'blue'], ['卖2', '50.63', '5.1万', 2], ['卖1', '50.60', '62.7万', 26, 'blue']
];
const buy = [
    ['买1', '50.59', '6.6万', 2], ['买2', '50.37', '138万', 59, 'hot'], ['买3', '50.36', '3.0万', 1],
    ['买4', '50.35', '45.8万', 19, 'hot'], ['买5', '50.34', '2.0万', 0], ['买6', '50.32', '5032', 0],
    ['买7', '50.30', '21.1万', 9], ['买8', '50.20', '1.0万', 0], ['买9', '50.08', '8.5万', 3], ['买10', '50.07', '1.5万', 0]
];

function levels(id, rows) {
    document.getElementById(id).innerHTML = rows.map(([name, px, amt, w, dot = '']) =>
        `<div class="level"><label>${name}</label><span class="px">${px}</span><span class="amt" style="--w: ${w}px">${amt}</span><i class="dot ${dot}"></i></div>`
    ).join('');
}

levels('sell', sell);
levels('buy', buy);
```
